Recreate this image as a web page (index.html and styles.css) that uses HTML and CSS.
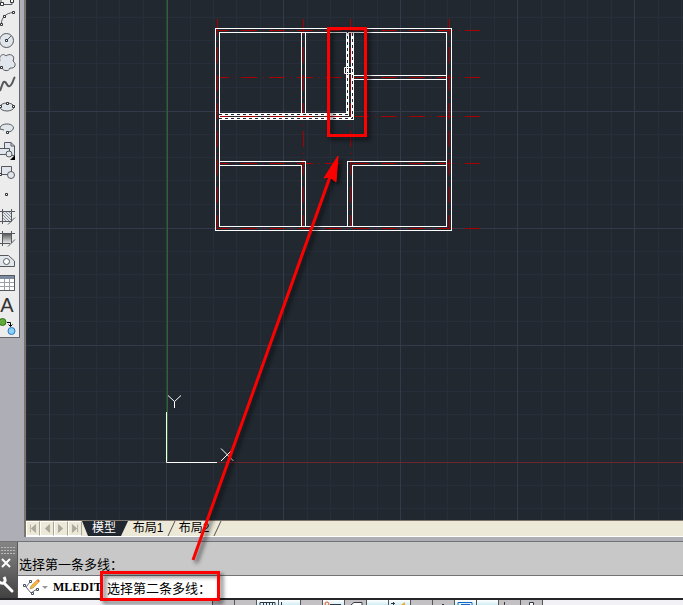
FILE: index.html
```html
<!DOCTYPE html>
<html lang="zh-CN">
<head>
<meta charset="utf-8">
<title>CAD</title>
<link rel="stylesheet" href="styles.css">
</head>
<body>
<div class="app">
  <div class="workspace">
    <aside class="dock">
      <div class="toolbar">
        <button class="tool tool-cut" aria-label="矩形"><svg viewBox="0 0 19 7"><path class="ln" d="M1 0V4.500H12V0"/><path class="pt" d="M.5 2.500h3v3h-3zM10.500-.5h3v3h-3z"/></svg></button>
        <button class="tool" aria-label="圆弧"><svg viewBox="0 0 19 22"><path class="ln" d="M1.500 17C1 11 6 6 13 5.500"/><path class="pt" d="M.5 16.500h2v2h-2zM3.500 8.500h2v2h-2zM12.500 4.500h2v2h-2z"/></svg></button>
        <button class="tool" aria-label="圆"><svg viewBox="0 0 19 22"><circle class="ln fill" cx="6.500" cy="11.500" r="7"/><path class="ln" d="M7 11l4-4"/><path class="pt" d="M5.500 10.500h2v2h-2z"/></svg></button>
        <button class="tool" aria-label="修订云线"><svg viewBox="0 0 19 22"><path class="ln fill" d="M0 10C-2 4 4 2 6 5C9 2 16 4 13 10C17 13 15 18 10 17C9 21 3 20 2 17C-3 18-4 12 0 10Z"/><path class="pt" d="M.5 15.500h2v2h-2z"/></svg></button>
        <button class="tool" aria-label="样条曲线"><svg viewBox="0 0 19 22"><path class="ln curve" d="M0 18C3 10 3 8 5 9S8 16 11 12S13 6 15 4"/></svg></button>
        <button class="tool" aria-label="椭圆"><svg viewBox="0 0 19 22"><ellipse class="ln fill" cx="7" cy="12" rx="7" ry="4"/><path class="pt" d="M-.5 10.500h2v2h-2zM6.500 7.500h2v2h-2zM12.500 10.500h2v2h-2z"/></svg></button>
        <button class="tool" aria-label="椭圆弧"><svg viewBox="0 0 19 22"><path class="ln fill" d="M0 12C-1 6 13 5 13.500 11C13 14 10 15 7 15"/><path class="ln" d="M0 12l4 1"/><path class="pt" d="M6.500 14.500h2v2h-2z"/></svg></button>
        <button class="tool" aria-label="插入块"><svg viewBox="0 0 19 22"><path class="ln fill" d="M4.500 10V3.500H11L14.500 7V16.500H6"/><path class="ln" d="M11 3.500V7h3.500"/><path class="ln fill" d="M0 9.500H9.500V15.500H0"/><circle class="ln fill" cx="9" cy="15" r="3"/><path class="solid" d="M15 16v5h-5z"/></svg></button>
        <button class="tool" aria-label="创建块"><svg viewBox="0 0 19 22"><path class="ln fill" d="M1.500 14V5.500H11.500V13.500H1.500"/><circle class="ln fill" cx="11" cy="14" r="3.500"/><path class="pt" d="M-.5 12.500h2v2h-2z"/></svg></button>
        <button class="tool" aria-label="点"><svg viewBox="0 0 19 22"><path class="pt" d="M5.500 10.500h2v2h-2z"/></svg></button>
        <button class="tool" aria-label="图案填充"><svg viewBox="0 0 19 22"><path class="ln fill" d="M2.500 6.500h9v10h-9z"/><path class="ln" d="M2.500 4v15M11.500 4v12M0 6.500h15M0 16.500h10"/><path class="hatch" d="M3 13l3 3M3 10l6 6M3 7l8 8M6 7l5 5M9 7l2 2"/><path class="ln" d="M8 19.500l7-7"/></svg></button>
        <button class="tool" aria-label="渐变色"><svg viewBox="0 0 19 22"><defs><linearGradient id="shade" x2="0" y2="1"><stop stop-color="#555"/><stop offset="1" stop-color="#eee"/></linearGradient></defs><path fill="url(#shade)" d="M2.500 6.500h9v10h-9z"/><path class="ln" d="M2.500 4v15M11.500 4v12M0 6.500h15M0 16.500h10M8 19.500l7-7"/></svg></button>
        <button class="tool" aria-label="面域"><svg viewBox="0 0 19 22"><path class="ln fill" d="M0 6.500H8.500L14.500 12V17.500H0"/><circle class="ln hole" cx="6.500" cy="12.500" r="3"/></svg></button>
        <button class="tool" aria-label="表格"><svg viewBox="0 0 19 22"><path class="ln hole" d="M-1 4.500H14.500V19.500H-1"/><path class="head" d="M0 5h14v3H0z"/><path class="cells" d="M0 11.500h14M0 15.500h14M4.500 8v11M9.500 8v11"/><path class="ln" d="M0 4.500H14.500V19.500H0"/></svg></button>
        <button class="tool letter" aria-label="多行文字">A</button>
        <button class="tool" aria-label="添加选定对象"><svg viewBox="0 0 19 22"><circle cx="2.500" cy="7" r="3.500" fill="#62ab3b" stroke="#2e701b"/><circle cx="11.500" cy="16" r="3.500" fill="#8bd0fa" stroke="#2878c0"/><path class="arrow" d="M7 7.500h3.500V11M8.500 9.500l2 2 2-2"/></svg></button>
      </div>
    </aside>
    <main class="view">
      <svg class="drawing" role="img" aria-label="户型图">
        <defs>
          <pattern id="minor" x="166" y="462" width="117" height="117" patternUnits="userSpaceOnUse">
            <path class="grid-minor" d="M24.500 0V117M47.500 0V117M70.500 0V117M94.500 0V117M0 23.500H117M0 46.500H117M0 69.500H117M0 93.500H117"/>
            <path class="grid-major" d="M.5 0V117M0 .5H117"/>
          </pattern>
        </defs>
        <g transform="translate(-26 0)">
          <rect x="26" width="4000" height="4000" fill="url(#minor)"/>
          <path class="axis-y" d="M167.500 0V461"/>
          <path class="axis-x" d="M167 462.500H4000"/>
          <path class="center" d="M217 30.500H480M217 77.500H480M217 116.500H480M217 163.500H480M217 228.500H480"/>
          <path class="center center-v" d="M217.500 19V228M303.500 19V228M350.500 19V228M449.500 19V228"/>
          <path class="wall" d="M215.500 28.500H451.500V230.500H215.500ZM219.500 32.500H446.500V226.500H219.500ZM301.500 32V113M305.500 32V113M353 75.500H446M353 79.500H446M219 161.500H305.500V226M219 165.500H301.500V226M446 161.500H347.500V226M446 165.500H352.500V226"/>
          <path class="picked" d="M219 114.500H347.500V32M219 118.500H352.500V32"/>
          <path class="picked-dash" d="M219 114.500H347.500V32M219 118.500H352.500V32"/>
          <path class="pickbox" d="M344.500 67.500h7v6h-7z"/>
          <path class="ucs" d="M166.500 412V462.500H217"/>
          <path class="ucs-label" d="M168 395.500l6.500 6 6.500-6M174.500 401.500V408M221 448.500l12.500 12.500M233.500 448.500L221 461"/>
        </g>
      </svg>
      <nav class="tabs" aria-label="布局">
        <button class="step" aria-label="第一个"><svg viewBox="0 0 14 15"><path d="M4 3v9M10 3v9L5 7.500z"/></svg></button>
        <button class="step" aria-label="上一个"><svg viewBox="0 0 14 15"><path d="M10 3v9L5 7.500z"/></svg></button>
        <button class="step" aria-label="下一个"><svg viewBox="0 0 14 15"><path d="M4 3v9l5-4.500z"/></svg></button>
        <button class="step" aria-label="最后一个"><svg viewBox="0 0 14 15"><path d="M10 3v9M4 3v9l5-4.500z"/></svg></button>
        <button class="tab active">模型</button>
        <button class="tab">布局1</button>
        <button class="tab">布局2</button>
      </nav>
    </main>
  </div>
  <section class="command">
    <div class="handle">
      <svg class="grip" viewBox="0 0 17 8"><path d="M1 1.500h15M1 4.500h15M1 7.500h15"/></svg>
      <button aria-label="关闭"><svg viewBox="0 0 17 20"><path class="cross" d="M2 5l8 8M10 5l-8 8"/></svg></button>
      <button aria-label="自定义"><svg viewBox="0 0 17 20"><path class="wrench" d="M4 9l8 8"/><path class="jaw" d="M-1 8C3 11 7 8 4 3"/></svg></button>
    </div>
    <div class="lines">
      <p class="history">选择第一条多线：</p>
      <div class="prompt">
        <svg class="edit-icon" viewBox="0 0 28 20"><path class="nodes-line" d="M8 5l-4 5 5 6 6-4"/><path class="nodes" d="M7.500 3.500h2v2h-2zM1.500 7.500h2v2h-2zM9.500 15.500h2v2h-2zM14.500 11.500h2v2h-2z"/><path d="M8 12l1-3 6-6 2 2-6 6z" fill="#f6b73c" stroke="#b47328" stroke-width=".5"/><path d="M15 3l1-1 2 2-1 1z" fill="#e26a36"/><path d="M20 9h6l-3 3z" fill="#999"/></svg>
        <b class="verb">MLEDIT</b>
        <label for="cmd">选择第二条多线：</label>
        <input id="cmd" type="text">
      </div>
    </div>
  </section>
  <footer class="status">
    <span class="coords"></span>
    <span class="cell"></span>
    <span class="cell"></span>
    <span class="cell on"><svg viewBox="0 0 21 5"><path d="M3 5V2.500H18V5M6.500 2v3M9.500 2v3M12.500 2v3M15.500 2v3"/></svg></span>
    <span class="cell on"><svg viewBox="0 0 21 5"><path d="M2.500 2v3"/></svg></span>
    <span class="cell"></span>
    <span class="cell on"><svg viewBox="0 0 21 5"><circle class="snap" cx="4" cy="4" r="2"/><path d="M7 4.500h11"/></svg></span>
    <span class="cell"><svg viewBox="0 0 21 5"><path fill="#fff" d="M6 5L9 2.500H17V5"/></svg></span>
    <span class="cell on"></span>
    <span class="cell on"><svg viewBox="0 0 21 5"><path d="M2 3.500h4M4.500 2v3"/><path d="M12 5l4-3v3z" fill="#f5a623" stroke="none"/></svg></span>
    <span class="cell"></span>
    <span class="cell"><svg viewBox="0 0 21 5"><path d="M9 4.500h2"/></svg></span>
    <span class="cell on"><svg viewBox="0 0 21 5"><path class="props" d="M3 5V2.500H17V5M6 4.500h9"/></svg></span>
    <span class="cell on"></span>
    <span class="cell"><svg viewBox="0 0 21 5"><path d="M5.500 2v3"/></svg></span>
    <span class="cell"><svg viewBox="0 0 21 5"><path fill="#fff" d="M8.500 5V2.500h4V5"/></svg></span>
    <span class="rest"></span>
  </footer>
  <svg class="notes" aria-hidden="true">
    <rect x="328.500" y="28.500" width="37" height="107"/>
    <rect x="101.500" y="572.500" width="117" height="27"/>
    <path d="M193 560L331 174"/>
    <path class="tip" d="M338 156L324 178L330 177L336 182Z"/>
  </svg>
</div>
</body>
</html>
```

FILE: styles.css
```css
* { box-sizing: border-box; }
body {
  margin: 0;
  font-family: "Liberation Sans", "Noto Sans CJK SC", sans-serif;
  font-size: 13px;
  color: #000;
}
button {
  padding: 0;
  border: 0;
  background: none;
  font: inherit;
  color: inherit;
}
svg { display: block; fill: none; }

.app {
  position: relative;
  display: flex;
  flex-direction: column;
  height: 100vh;
  overflow: hidden;
  background: #adaeb6;
}
.workspace {
  flex: 1;
  display: flex;
  min-height: 0;
  padding-bottom: 4px;
}

/* Draw toolbar */
.dock { width: 24px; }
.toolbar {
  width: 20px;
  background: #ececec;
  border-right: 1px solid #65656b;
  border-bottom: 1px solid #65656b;
}
.tool { display: block; width: 100%; height: 22px; }
.tool-cut { height: 7px; }
.tool svg { width: 19px; height: 100%; }
.letter { padding-right: 5px; font-size: 20px; line-height: 24px; color: #333; }
.ln { stroke: #55595f; }
.curve { stroke-width: 2; }
.arrow { stroke: #000; }
.fill { fill: #e1e6ec; }
.hole { fill: #fff; }
.pt { fill: #fff; stroke: #30343a; }
.solid { fill: #000; }
.hatch { stroke: #8c8f94; }
.head { fill: #7d8ba0; }
.cells { stroke: #9aa0a8; }

/* Drawing area */
.view {
  flex: 1;
  display: flex;
  flex-direction: column;
  min-width: 0;
  border-left: 2px solid #7d756b;
  background: #212830;
}
.drawing { flex: 1; width: 100%; min-height: 0; }
.grid-minor { stroke: #272e39; }
.grid-major { stroke: #343a49; }
.axis-y { stroke: #226c26; }
.axis-x { stroke: #6b262b; }
.center { stroke: #a80000; stroke-dasharray: 16 6 1 5; stroke-dashoffset: 4; }
.center-v { stroke-dashoffset: 0; }
.wall, .pickbox, .ucs, .ucs-label { stroke: #fff; }
.wall, .picked, .picked-dash { shape-rendering: crispEdges; }
.picked { stroke: #fff; stroke-width: 3; }
.picked-dash { stroke: #212830; stroke-dasharray: 3 3; }

/* Layout tabs */
.tabs {
  display: flex;
  height: 17px;
  border-top: 1px solid #7d756b;
  border-bottom: 1px solid #fff;
  background: #ece9d8;
  font-size: 12px;
  line-height: 15px;
}
.step { width: 14px; border: 1px solid #fff; border-right-color: #aaa594; }
.step svg { width: 100%; height: 13px; }
.step path { fill: #aaa79b; stroke: #aaa79b; }
.tab {
  position: relative;
  width: 46px;
  padding-right: 6px;
  white-space: nowrap;
}
.tab::after {
  content: "";
  position: absolute;
  top: 0;
  right: 2px;
  width: 1px;
  height: 15px;
  background: #55524a;
  transform: skewX(-25deg);
}
.active {
  padding-right: 2px;
  color: #fff;
  background: #212830;
  clip-path: polygon(0 0, 100% 0, 39px 100%, 6px 100%);
}

/* Command window */
.command { display: flex; height: 57px; border-top: 1px solid #737376; }
.handle {
  display: flex;
  flex-direction: column;
  width: 18px;
  border-right: 1px solid #555;
  background: linear-gradient(#858585, #646464 50%, #414141);
}
.grip { width: 17px; height: 8px; margin: 4px 0 0; stroke: #bbb; stroke-dasharray: 2 1; }
.handle button { height: 20px; }
.handle button svg { width: 17px; height: 20px; }
.cross { stroke: #fff; stroke-width: 2; }
.wrench { stroke: #fff; stroke-width: 3; stroke-linecap: round; }
.jaw { stroke: #fff; stroke-width: 3; }
.lines { flex: 1; display: flex; flex-direction: column; min-width: 0; }
.history {
  flex: 1;
  margin: 0;
  padding: 13px 1px 0;
  line-height: 20px;
  background: #c8c8c8;
  white-space: nowrap;
}
.prompt {
  display: flex;
  align-items: center;
  height: 23px;
  padding-left: 4px;
  border-top: 1px solid #737376;
  background: #fff;
  white-space: nowrap;
}
.edit-icon { width: 28px; height: 20px; }
.nodes-line { stroke: #666; }
.nodes { fill: #fff; stroke: #445064; }
.verb { width: 50px; margin: 0 4px 0 3px; font-family: "Liberation Serif", serif; font-size: 12px; }
.prompt input { flex: 1; min-width: 0; border: 0; outline: 0; background: none; font: inherit; }

/* Status bar */
.status { display: flex; height: 7px; border-top: 2px solid #252528; background: #f2f2f6; }
.coords { width: 213px; border-right: 1px solid #55555a; }
.cell { width: 22px; border-right: 1px solid #55555a; background: #c3c1c4; }
.on { background: linear-gradient(#fff, #d0edf4); }
.cell svg { width: 21px; height: 5px; stroke: #333846; }
.cell .snap { stroke: #e65321; }
.cell .props { stroke: #1668c4; }
.rest { flex: 1; }

/* Red callouts over the window */
.notes {
  position: absolute;
  inset: 0;
  width: 100%;
  height: 100%;
  pointer-events: none;
  stroke: #f00;
  stroke-width: 3;
  filter: drop-shadow(3px 3px 2px rgba(0, 0, 0, 0.6));
}
.tip { fill: #f00; stroke-width: 1; }
```
